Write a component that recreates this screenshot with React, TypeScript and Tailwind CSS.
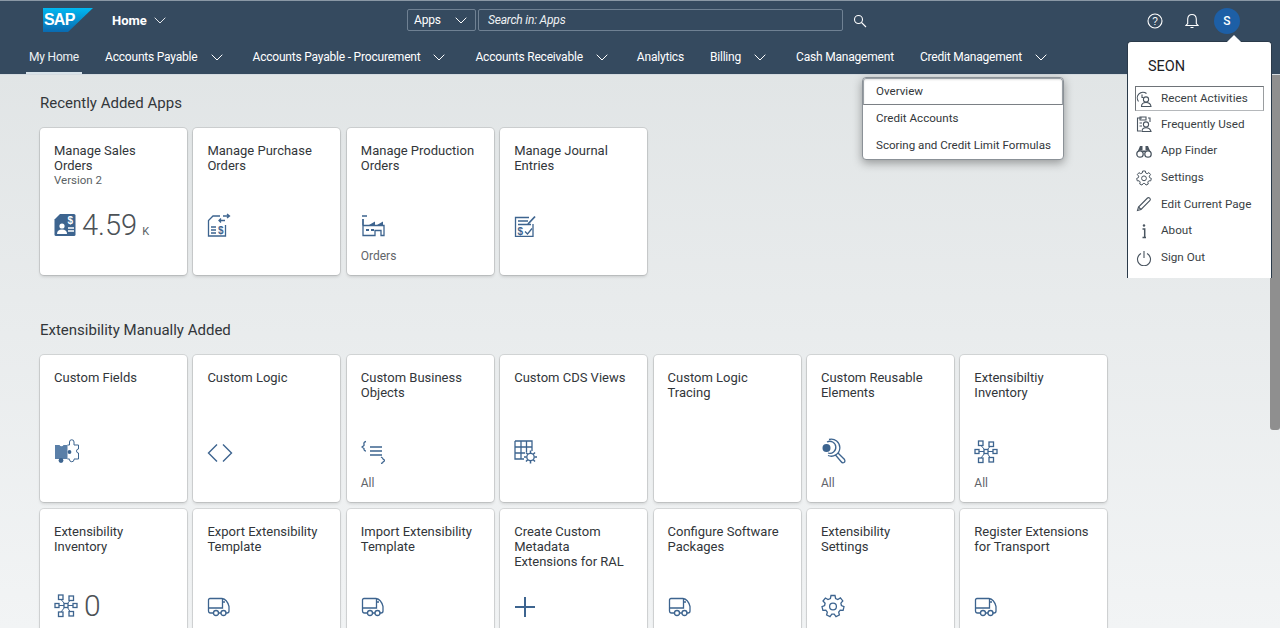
import React from "react";

const C = "#3d648f";
const Sv = ({ w = 26, h = 26, children }: { w?: number; h?: number; children: React.ReactNode }) => (
  <svg width={w} height={h} viewBox={`0 0 ${w} ${h}`} fill="none" stroke={C} strokeWidth="1.3" className="block shrink-0">{children}</svg>
);

const Truck = () => (
  <Sv w={24} h={21}>
    <path d="M7 16H3.5Q1.5 16 1.5 14V3Q1.5 1.5 3 1.5H15Q20 2 22 9.5V14Q22 16 20 16H18.5M11.5 16H14" />
    <path d="M1.5 11H15.5V1.8M15.5 5H18" />
    <circle cx="9" cy="16" r="2.5" /><circle cx="16.5" cy="16" r="2.5" />
  </Sv>
);
const Net = () => (
  <Sv w={24} h={24}>
    <rect x="4.5" y="1" width="4.5" height="4.5" /><rect x="15" y="2" width="4.5" height="4.5" />
    <rect x="1" y="9.5" width="4" height="4" /><rect x="10" y="9.5" width="4" height="4" /><rect x="19" y="9.5" width="4" height="4" />
    <rect x="4.5" y="18" width="4.5" height="4.5" /><rect x="15" y="17.5" width="4.5" height="4.5" />
    <path d="M7 5.5L10.5 9.5M16 6.5L13.5 9.5M5 11.5H10M14 11.5H19M7 18L10.5 13.5M16 17.5L13.5 13.5" strokeWidth="1" />
  </Sv>
);
const Gear = ({ s = 24 }: { s?: number }) => (
  <svg width={s} height={s} viewBox="0 0 24 24" fill="none" stroke={C} strokeWidth="1.3" className="block">
    <path d="M10 1.5h4l.6 3 2.2 1 2.6-1.6 2.4 3-1.9 2.3.5 2.3 2.6 1.2-.9 3.6-2.9-.1-1.5 1.9.7 2.9-3.4 1.6-1.8-2.4h-2.4l-1.8 2.4-3.4-1.6.7-2.9-1.5-1.9-2.9.1-.9-3.6 2.6-1.2.5-2.3L2 7l2.4-3L7 5.5l2.4-1z" />
    <circle cx="12" cy="12.5" r="3.4" />
  </svg>
);
const SalesIcon = () => (
  <Sv w={22} h={24}>
    <path fill={C} stroke="none" d="M6 1H20Q21.5 1 21.5 2.5V21.5Q21.5 23 20 23H2Q.5 23 .5 21.5V6.5Z" />
    <path fill="none" stroke="#fff" d="M14 15H20M14 18H20" />
    <circle cx="8" cy="13" r="2.6" fill="#fff" stroke="none" />
    <path fill="#fff" stroke="none" d="M3 21Q3 16.5 8 16.5T13 21Z" />
    <text x="13.5" y="11" fontSize="10" fill="#fff" stroke="none" fontFamily="Liberation Sans" fontWeight="700">$</text>
  </Sv>
);
const PurchaseIcon = () => (
  <Sv w={24} h={24}>
    <path d="M13 3H6L1.5 7.5V23H18.5V12" />
    <path d="M4 14H9M4 17H9M4 20H9M16 3H22M20 1l2.5 2L20 5M18 7.5H12M14 5.5L12 7.5L14 9.5" />
    <text x="11" y="21" fontSize="10" fill={C} stroke="none" fontFamily="Liberation Sans" fontWeight="700">$</text>
  </Sv>
);
const FactoryIcon = () => (
  <Sv w={24} h={22}>
    <path d="M1 1H6M2 4V20.5H14V15.5H20V20.5H23V10.5H2" />
    <path d="M2 4V10.5" />
    <path fill={C} stroke="none" d="M8 10L14 6.5V10ZM16 10L22 6.5V10ZM5 14H8V16H5ZM10 14H13V16H10Z" />
  </Sv>
);
const JournalIcon = () => (
  <Sv w={22} h={22}>
    <path d="M15 2.5H1.5V21.5H19V9" />
    <path d="M4 6H14M4 9.5H17" />
    <path d="M14 9L21 1.5" strokeWidth="1.8" />
    <path d="M11 16.5L13.5 19L18 13.5" />
    <text x="3.5" y="19.5" fontSize="10" fill={C} stroke="none" fontFamily="Liberation Sans" fontWeight="700">$</text>
  </Sv>
);
const PuzzleIcon = () => (
  <Sv w={26} h={26}>
    <path fill="#5a7fa8" stroke="none" d="M1 7H5.5A2.2 2.2 0 0 0 9.5 7H13.5V21H1Z" />
    <circle cx="7" cy="22.5" r="2.4" fill={C} stroke="none" />
    <path strokeWidth="1" d="M13.5 7H15.5V4A2.2 2.2 0 1 1 20 4V7H24.5V11A2 2 0 0 0 24.5 15V21H20V21.5A2.2 2.2 0 1 1 15.5 21.5V21H13.5" />
    <circle cx="15.5" cy="14" r="1.9" fill={C} stroke="none" />
  </Sv>
);
const CodeIcon = () => (
  <Sv w={26} h={21}><path d="M10 1.5L1.5 10L10 18.5M16 1.5L24.5 10L16 18.5" strokeWidth="1.4" /></Sv>
);
const BizIcon = () => (
  <Sv w={24} h={24}>
    <path d="M5 1.5Q2.5 2 3 4V5.5L1 7L3 8.5V9.5Q3 11 5 11M9 7H21M9 11H21M9 15H21M20 17Q22 18 22 19L24 20.5L22 22Q22 23 20 23.5" strokeWidth="1.3" />
  </Sv>
);
const CdsIcon = () => (
  <Sv w={24} h={24}>
    <path d="M1 1H18V11M1 1V19H10M1 7H18M1 13H11M7 1V19M12.5 1V12" />
    <circle cx="16.5" cy="17" r="3.7" />
    <path d="M16.5 10.5V13M16.5 21V23.5M10 17H12.5M20.5 17H23M12 12.5L13.7 14.2M19.3 19.8L21 21.5M21 12.5L19.3 14.2M13.7 19.8L12 21.5" strokeWidth="1.5" />
  </Sv>
);
const ReuseIcon = () => (
  <Sv w={26} h={26}>
    <path d="M8 1.5A8.5 8.5 0 1 1 7 17.5M17 15L23.5 21.5Q24.5 23.5 23 24.5T20 23.5L14.5 17" />
    <path d="M6 4A6 6 0 1 1 7 15" />
    <circle cx="5.5" cy="10" r="4" fill={C} stroke="none" />
  </Sv>
);

const Chevron = ({ cls = "text-white", w = 12 }: { cls?: string; w?: number }) => (
  <svg width={w} height={7} viewBox="0 0 12 7" fill="none" stroke="currentColor" strokeWidth="1" className={`block shrink-0 ${cls}`}>
    <path d="M.7.7L6 6L11.3.7" />
  </svg>
);

type T = { t: string[]; sub?: string; icon?: React.ReactNode; num?: string; unit?: string; foot?: string };

const Tile = ({ t, sub, icon, num, unit, foot }: T) => (
  <div className="w-[147px] h-[147px] shrink-0 bg-white rounded-[4px] shadow-[0_0_0_1px_rgba(0,0,0,0.1),0_2px_3px_rgba(0,0,0,0.12)] px-[14px] pt-[14.5px] pb-[12px] flex flex-col">
    <div className="text-[13px] leading-[15.2px] text-[#32363a]">
      {t.map((l) => <div key={l} className="whitespace-nowrap">{l}</div>)}
    </div>
    {sub && <div className="text-[11.5px] leading-[14px] text-[#5a5f64]">{sub}</div>}
    <div className="mt-auto flex flex-col">
      <div className="flex items-end h-[26px]">
        {icon}
        {num && <span className={`${unit ? "text-[29px]" : "text-[30px]"} ml-[6px] mb-[-1px] leading-[26px] font-light text-[#4c5156]`}>{num}</span>}
        {unit && <span className="text-[11px] leading-[14px] ml-[5px] mb-[-2px] text-[#5a5f64]">{unit}</span>}
      </div>
      <div className="text-[12px] leading-[14px] text-[#5f6469] mt-[12px] h-[14px]">{foot}</div>
    </div>
  </div>
);

const Row = ({ items }: { items: T[] }) => <div className="flex gap-[6.4px]">{items.map((i) => <Tile key={i.t.join()} {...i} />)}</div>;

const nav: [string, boolean, string][] = [
  ["Accounts Payable", true, "ml-[26px]"],
  ["Accounts Payable - Procurement", true, "ml-[30px]"],
  ["Accounts Receivable", true, "ml-[30px]"],
  ["Analytics", false, "ml-[29px]"],
  ["Billing", true, "ml-[26px]"],
  ["Cash Management", false, "ml-[30px]"],
  ["Credit Management", true, "ml-[26px]"],
];

const MenuIcon = ({ n }: { n: number }) => {
  const s = { width: 16, height: 16, viewBox: "0 0 16 16", fill: "none", stroke: "#4a5560", strokeWidth: 1.1, className: "block" };
  if (n === 0) return <svg {...s}><path d="M10.5 2.5A5.7 5.7 0 0 0 2.5 10.5" /><path d="M6 3.5V6.5H7.5" /><circle cx="10" cy="8.5" r="2.6" /><path d="M5.5 15.5Q5.5 11.5 10 11.5T15 15.5Z" /></svg>;
  if (n === 1) return <svg {...s}><path d="M6 2H1.5V15H5M12 2H14V6" /><path d="M4 1H10V4H4Z" /><circle cx="10" cy="8.5" r="2.6" /><path d="M6 15.5Q6 11.7 10 11.7T15 15.5Z" /><path d="M3.5 7H6M3.5 10H6" /></svg>;
  if (n === 2) return <svg {...s} fill="#4a5560"><circle cx="4" cy="11" r="3.2" fill="none" strokeWidth="1.3" /><circle cx="12" cy="11" r="3.2" fill="none" strokeWidth="1.3" /><path d="M1.5 9L4 3H6.5V7.5H9.5V3H12L14.5 9L12 7.5H9.5V9H6.5V7.5H4Z" stroke="none" /></svg>;
  if (n === 3) return <svg {...s} viewBox="0 0 24 24" strokeWidth={1.5}><path d="M10 1.5h4l.6 3 2.2 1 2.6-1.6 2.4 3-1.9 2.3.5 2.3 2.6 1.2-.9 3.6-2.9-.1-1.5 1.9.7 2.9-3.4 1.6-1.8-2.4h-2.4l-1.8 2.4-3.4-1.6.7-2.9-1.5-1.9-2.9.1-.9-3.6 2.6-1.2.5-2.3L2 7l2.4-3L7 5.5l2.4-1z" /><circle cx="12" cy="12.5" r="3.6" /></svg>;
  if (n === 4) return <svg {...s}><path d="M1.5 14.5L2.5 11L11.5 2Q12.5 1 13.7 2.2T14 4.5L5 13.5Z" /><path d="M2.5 11L5 13.5" /></svg>;
  if (n === 5) return <svg {...s}><circle cx="8" cy="2.5" r="1.2" fill="#4a5560" stroke="none" /><path d="M6.5 6H8.7V14M6.5 14.5H10" strokeWidth="1.5" /></svg>;
  return <svg {...s}><path d="M5 3.5A6.5 6.5 0 1 0 11 3.5" /><path d="M8 1V8" /></svg>;
};

const userMenu = ["Recent Activities", "Frequently Used", "App Finder", "Settings", "Edit Current Page", "About", "Sign Out"];

export default function App() {
  return (
    <div className="relative w-[1280px] h-[628px] overflow-hidden bg-gradient-to-b from-[#dfe3e4] to-[#f2f4f5] font-['Roboto','Noto_Sans',sans-serif] text-[#32363a]">
      <header className="h-[75px] bg-[#354a5f] border-t border-t-[#8a98a5] border-b border-b-[#d5dbe0] text-white">
        <div className="h-[39px] flex items-center">
          <svg width="50" height="24" viewBox="0 0 50 24" className="block ml-[43px] mt-[-2px] shrink-0">
            <defs><linearGradient id="g" x1="0" y1="0" x2="0" y2="1"><stop offset="0" stopColor="#00b8f1" /><stop offset="1" stopColor="#0a6ab0" /></linearGradient></defs>
            <path d="M0 0H50L25 24H0Z" fill="url(#g)" />
            <text x="1" y="17" fontSize="16" fontWeight="700" fill="#fff" fontFamily="Liberation Sans" letterSpacing="-0.8">SAP</text>
          </svg>
          <span className="ml-[19px] w-[36px] text-[13px] font-bold leading-none">Home</span>
          <Chevron cls="ml-[6px] text-[#e4e8ec]" />
          <div className="ml-[241px] flex gap-[2px] mt-[-1px]">
            <div className="w-[69px] h-[22px] border border-[#6f8193] rounded-[2px] flex items-center pl-[6px] text-[12px] tracking-[-0.2px]">
              <span className="w-[28px]">Apps</span><Chevron cls="ml-[13px]" />
            </div>
            <div className="w-[365px] h-[22px] border border-[#6f8193] rounded-[2px] flex items-center pl-[9px] text-[12px] tracking-[-0.2px] italic text-[#eef1f3]">Search in: Apps</div>
          </div>
          <svg width="14" height="14" viewBox="0 0 14 14" fill="none" stroke="#fff" strokeWidth="1.1" className="ml-[10px] block"><circle cx="5.5" cy="5.5" r="4" /><path d="M8.5 8.5L13 13" /></svg>
          <svg width="16" height="16" viewBox="0 0 16 16" fill="none" stroke="#fff" strokeWidth="1.1" className="ml-[280px] block"><circle cx="8" cy="8" r="7" /><text x="8" y="11.5" fontSize="10" textAnchor="middle" fill="#fff" stroke="none" fontFamily="Liberation Sans">?</text></svg>
          <svg width="14" height="16" viewBox="0 0 14 16" fill="none" stroke="#fff" strokeWidth="1.1" className="ml-[22px] block"><path d="M1 12.5H13L11.3 10.5V6Q11 1.5 7 1.5T2.7 6V10.5ZM5.5 14.5H8.5" /></svg>
          <div className="ml-[15px] w-[26px] h-[26px] rounded-full bg-[#1d5fa6] flex items-center justify-center text-[12px] font-medium">S</div>
        </div>
        <nav className="h-[34px] flex items-center text-[12px] tracking-[-0.2px] pl-[26px]">
          <div className="h-[34px] px-[3px] pt-[1px] flex items-center border-b-[2px] border-b-[#d8e3ea] text-[#edf1f4]">My Home</div>
          <div className="flex items-center ml-[-3px]">
            {nav.map(([l, c, m]) => (
              <div key={l} className={`flex items-center ${m}`}>
                <span className="whitespace-nowrap">{l}</span>
                {c && <Chevron cls="ml-[13px]" />}
              </div>
            ))}
          </div>
        </nav>
      </header>

      <main className="pl-[40px]">
        <h2 className="text-[15px] leading-[20px] font-normal mt-[18px] text-[#32363a]">Recently Added Apps</h2>
        <div className="mt-[15px]">
          <Row items={[
            { t: ["Manage Sales", "Orders"], sub: "Version 2", icon: <SalesIcon />, num: "4.59", unit: "K" },
            { t: ["Manage Purchase", "Orders"], icon: <PurchaseIcon /> },
            { t: ["Manage Production", "Orders"], icon: <FactoryIcon />, foot: "Orders" },
            { t: ["Manage Journal", "Entries"], icon: <JournalIcon /> },
          ]} />
        </div>
        <h2 className="text-[15px] leading-[20px] font-normal mt-[45px] text-[#32363a]">Extensibility Manually Added</h2>
        <div className="mt-[15px] flex flex-col gap-[7px]">
          <Row items={[
            { t: ["Custom Fields"], icon: <PuzzleIcon /> },
            { t: ["Custom Logic"], icon: <CodeIcon /> },
            { t: ["Custom Business", "Objects"], icon: <BizIcon />, foot: "All" },
            { t: ["Custom CDS Views"], icon: <CdsIcon /> },
            { t: ["Custom Logic", "Tracing"] },
            { t: ["Custom Reusable", "Elements"], icon: <ReuseIcon />, foot: "All" },
            { t: ["Extensibiltiy", "Inventory"], icon: <Net />, foot: "All" },
          ]} />
          <Row items={[
            { t: ["Extensibility", "Inventory"], icon: <Net />, num: "0" },
            { t: ["Export Extensibility", "Template"], icon: <Truck /> },
            { t: ["Import Extensibility", "Template"], icon: <Truck /> },
            { t: ["Create Custom", "Metadata", "Extensions for RAL"], icon: <svg width="22" height="22" viewBox="0 0 22 22" fill="none" stroke={C} strokeWidth="2" className="block"><path d="M11 1V21M1 11H21" /></svg> },
            { t: ["Configure Software", "Packages"], icon: <Truck /> },
            { t: ["Extensibility", "Settings"], icon: <Gear /> },
            { t: ["Register Extensions", "for Transport"], icon: <Truck /> },
          ]} />
        </div>
      </main>

      {/* submenu popover */}
      <div className="absolute left-[862px] top-[77px] w-[202px] h-[83px] bg-white border border-[#8b9197] rounded-[4px] shadow-[0_3px_10px_rgba(0,0,0,0.35)] text-[11.6px] overflow-hidden">
        <div className="h-[27px] pl-[12px] flex items-center border border-[#9aa0a5] border-b-[#7b8085] rounded-t-[3px] shadow-[inset_0_1px_2px_rgba(0,0,0,0.12)]">Overview</div>
        <div className="h-[27px] pl-[13px] flex items-center">Credit Accounts</div>
        <div className="h-[27px] pl-[13px] flex items-center whitespace-nowrap">Scoring and Credit Limit Formulas</div>
      </div>

      {/* scrollbar */}
      <div className="absolute right-0 top-[75px] w-[10px] h-[355px] bg-[#8f8f8f] rounded-b-[3px]" />

      {/* user popover */}
      <div className="absolute left-[1127px] top-[41px] w-[145px] h-[237px] bg-white rounded-t-[4px] border border-[#2a3a4a] border-b-0 pl-[7px] pr-[7px] text-[11.7px]">
        <div className="absolute left-[101px] top-[-5px] w-[10px] h-[10px] bg-white rotate-45" />
        <div className="pl-[13px] pt-[15px] h-[44px] text-[14.5px] leading-[20px] text-[#1d2126]">SEON</div>
        {userMenu.map((m, i) => (
          <div key={m} className={`flex items-center ${i === 0 ? "h-[25px] border border-[#6e7378] border-b-[#b5b8bb] border-r-[#9a9da0]" : "h-[26.7px] pl-[1px]"}`}>
            <span className="w-[25px] flex shrink-0"><MenuIcon n={i} /></span>
            <span className="whitespace-nowrap text-[#3a3f44]">{m}</span>
          </div>
        ))}
      </div>
    </div>
  );
}
